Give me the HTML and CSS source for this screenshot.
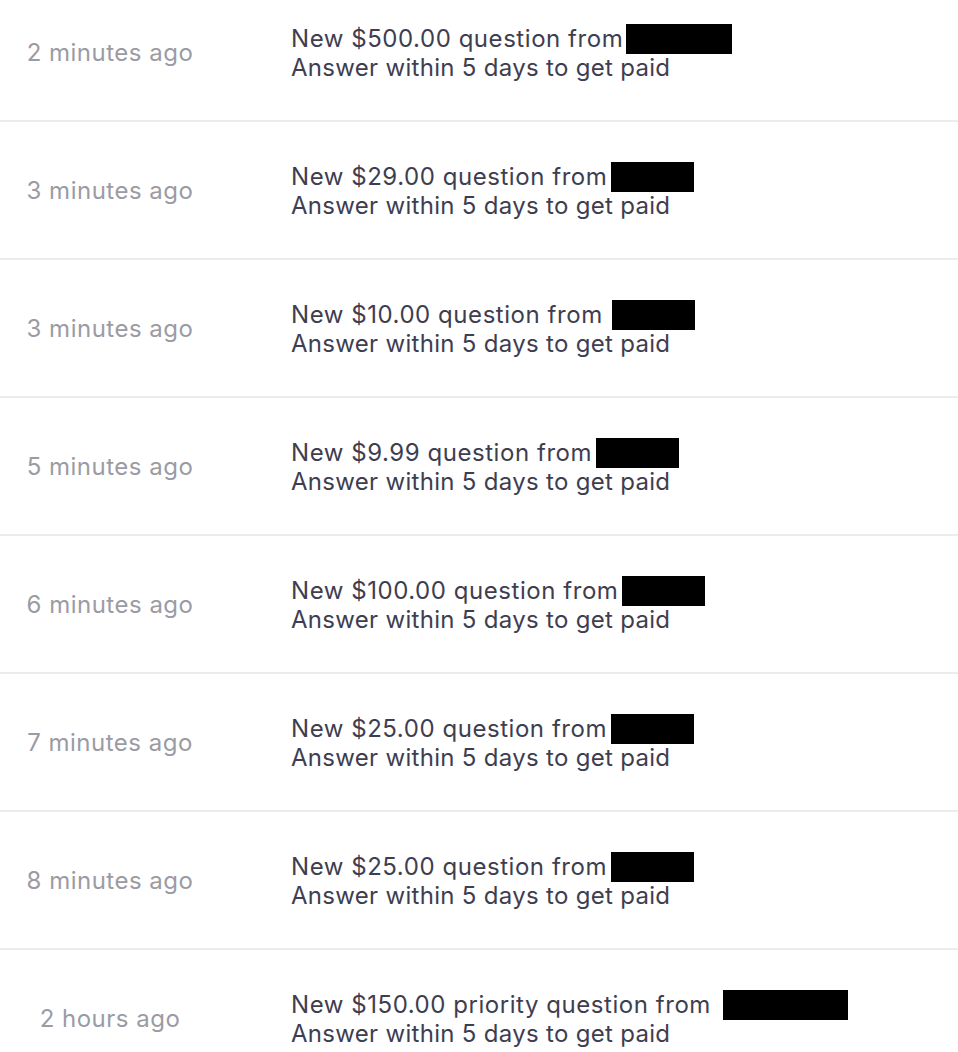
FILE: index.html
```html
<!DOCTYPE html>
<html>
<head>
<meta charset="utf-8">
<link rel="stylesheet" href="styles.css">
</head>
<body>
<ul class="feed">
  <li class="item"><div class="time">2 minutes ago</div><div class="msg"><div class="title">New $500.00 question from<span class="redact r1"></span></div><div class="sub">Answer within 5 days to get paid</div></div></li>
  <li class="item"><div class="time">3 minutes ago</div><div class="msg"><div class="title">New $29.00 question from<span class="redact"></span></div><div class="sub">Answer within 5 days to get paid</div></div></li>
  <li class="item"><div class="time">3 minutes ago</div><div class="msg"><div class="title">New $10.00 question from<span class="redact wide-gap"></span></div><div class="sub">Answer within 5 days to get paid</div></div></li>
  <li class="item"><div class="time">5 minutes ago</div><div class="msg"><div class="title">New $9.99 question from<span class="redact"></span></div><div class="sub">Answer within 5 days to get paid</div></div></li>
  <li class="item"><div class="time">6 minutes ago</div><div class="msg"><div class="title">New $100.00 question from<span class="redact"></span></div><div class="sub">Answer within 5 days to get paid</div></div></li>
  <li class="item"><div class="time">7 minutes ago</div><div class="msg"><div class="title">New $25.00 question from<span class="redact"></span></div><div class="sub">Answer within 5 days to get paid</div></div></li>
  <li class="item"><div class="time">8 minutes ago</div><div class="msg"><div class="title">New $25.00 question from<span class="redact"></span></div><div class="sub">Answer within 5 days to get paid</div></div></li>
  <li class="item"><div class="time">2 hours ago</div><div class="msg"><div class="title">New $150.00 priority question from<span class="redact r8"></span></div><div class="sub">Answer within 5 days to get paid</div></div></li>
</ul>
</body>
</html>
```
FILE: styles.css
```css
html, body {
  margin: 0;
  padding: 0;
  background: #ffffff;
}
body {
  font-family: Inter, "Noto Sans", sans-serif;
  overflow: hidden;
}
.feed {
  list-style: none;
  margin: -16px 0 0 0;
  padding: 0;
}
.item {
  display: flex;
  align-items: center;
  height: 136px;
  border-bottom: 2px solid #ececec;
}
.time {
  width: 220px;
  flex: none;
  text-align: center;
  color: #9b9ba4;
  font-size: 24px;
  letter-spacing: 0.5px;
}
.msg {
  margin-left: 71px;
  padding-top: 1px;
  color: #3e3e50;
  font-size: 24px;
  line-height: 28px;
  letter-spacing: 0.3px;
}
.title {
  display: flex;
  align-items: center;
  letter-spacing: 0.55px;
}
.redact {
  display: inline-block;
  background: #000;
  height: 30px;
  width: 83px;
  margin-left: 4px;
}
.wide-gap { margin-left: 9px; }
.r1 { width: 106px; margin-left: 3px; }
.r8 { width: 125px; margin-left: 12px; }
```
